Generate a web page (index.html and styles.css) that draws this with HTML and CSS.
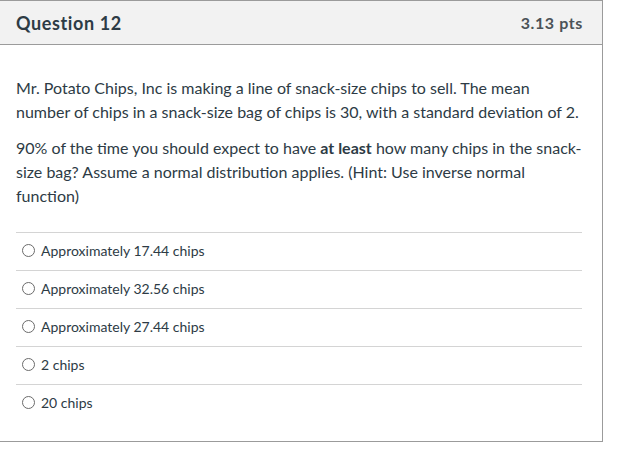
FILE: index.html
```html
<!DOCTYPE html>
<html>
<head>
<meta charset="utf-8">
<link rel="stylesheet" href="styles.css">
</head>
<body>
<div class="card">
  <div class="header">
    <span class="title">Question 12</span>
    <span class="pts">3.13 pts</span>
  </div>
  <div class="content">
    <p>Mr. Potato Chips, Inc is making a line of snack-size chips to sell. The mean number of chips in a snack-size bag of chips is 30, with a standard deviation of 2.</p>
    <p>90% of the time you should expect to have <strong>at least</strong> how many chips in the snack-size bag? Assume a normal distribution applies. (Hint: Use inverse normal function)</p>
    <div class="answers">
      <label class="answer"><span class="radio"></span>Approximately 17.44 chips</label>
      <label class="answer"><span class="radio"></span>Approximately 32.56 chips</label>
      <label class="answer"><span class="radio"></span>Approximately 27.44 chips</label>
      <label class="answer"><span class="radio"></span>2 chips</label>
      <label class="answer"><span class="radio"></span>20 chips</label>
    </div>
  </div>
</div>
</body>
</html>
```
FILE: styles.css
```css
html, body { margin: 0; padding: 0; background: #fff; }
body { font-family: Lato, "Open Sans", sans-serif; color: #2d3b45; }
.card {
  width: 603px;
  border: 1px solid #9b9b9b;
  border-left: none;
  box-sizing: border-box;
  height: 442px;
}
.header {
  height: 44px;
  background: #f2f2f2;
  border-bottom: 1px solid #9b9b9b;
  display: flex;
  align-items: center;
  justify-content: space-between;
  padding: 0 19px 0 16px;
  box-sizing: border-box;
}
.title { font-size: 18px; font-weight: 700; color: #2d3b45; letter-spacing: 0.6px; }
.pts { font-size: 16px; font-weight: 700; color: #4b5257; letter-spacing: 0.6px; }
.content { padding: 31px 16px 0 16px; }
.content p { margin: 0 0 12px 0; font-size: 16px; line-height: 24px; }
.content strong { font-weight: 700; }
.answers { margin-top: 24px; margin-right: 4px; }
.answer {
  display: flex;
  align-items: center;
  height: 38px;
  border-top: 1px solid #d4d4d4;
  box-sizing: border-box;
  font-size: 14px;
  padding-left: 6px;
  padding-bottom: 2px;
}
.radio {
  width: 11px;
  height: 11px;
  border: 1px solid #6b6b6b;
  border-radius: 50%;
  margin-right: 6px;
  flex: none;
}
```
